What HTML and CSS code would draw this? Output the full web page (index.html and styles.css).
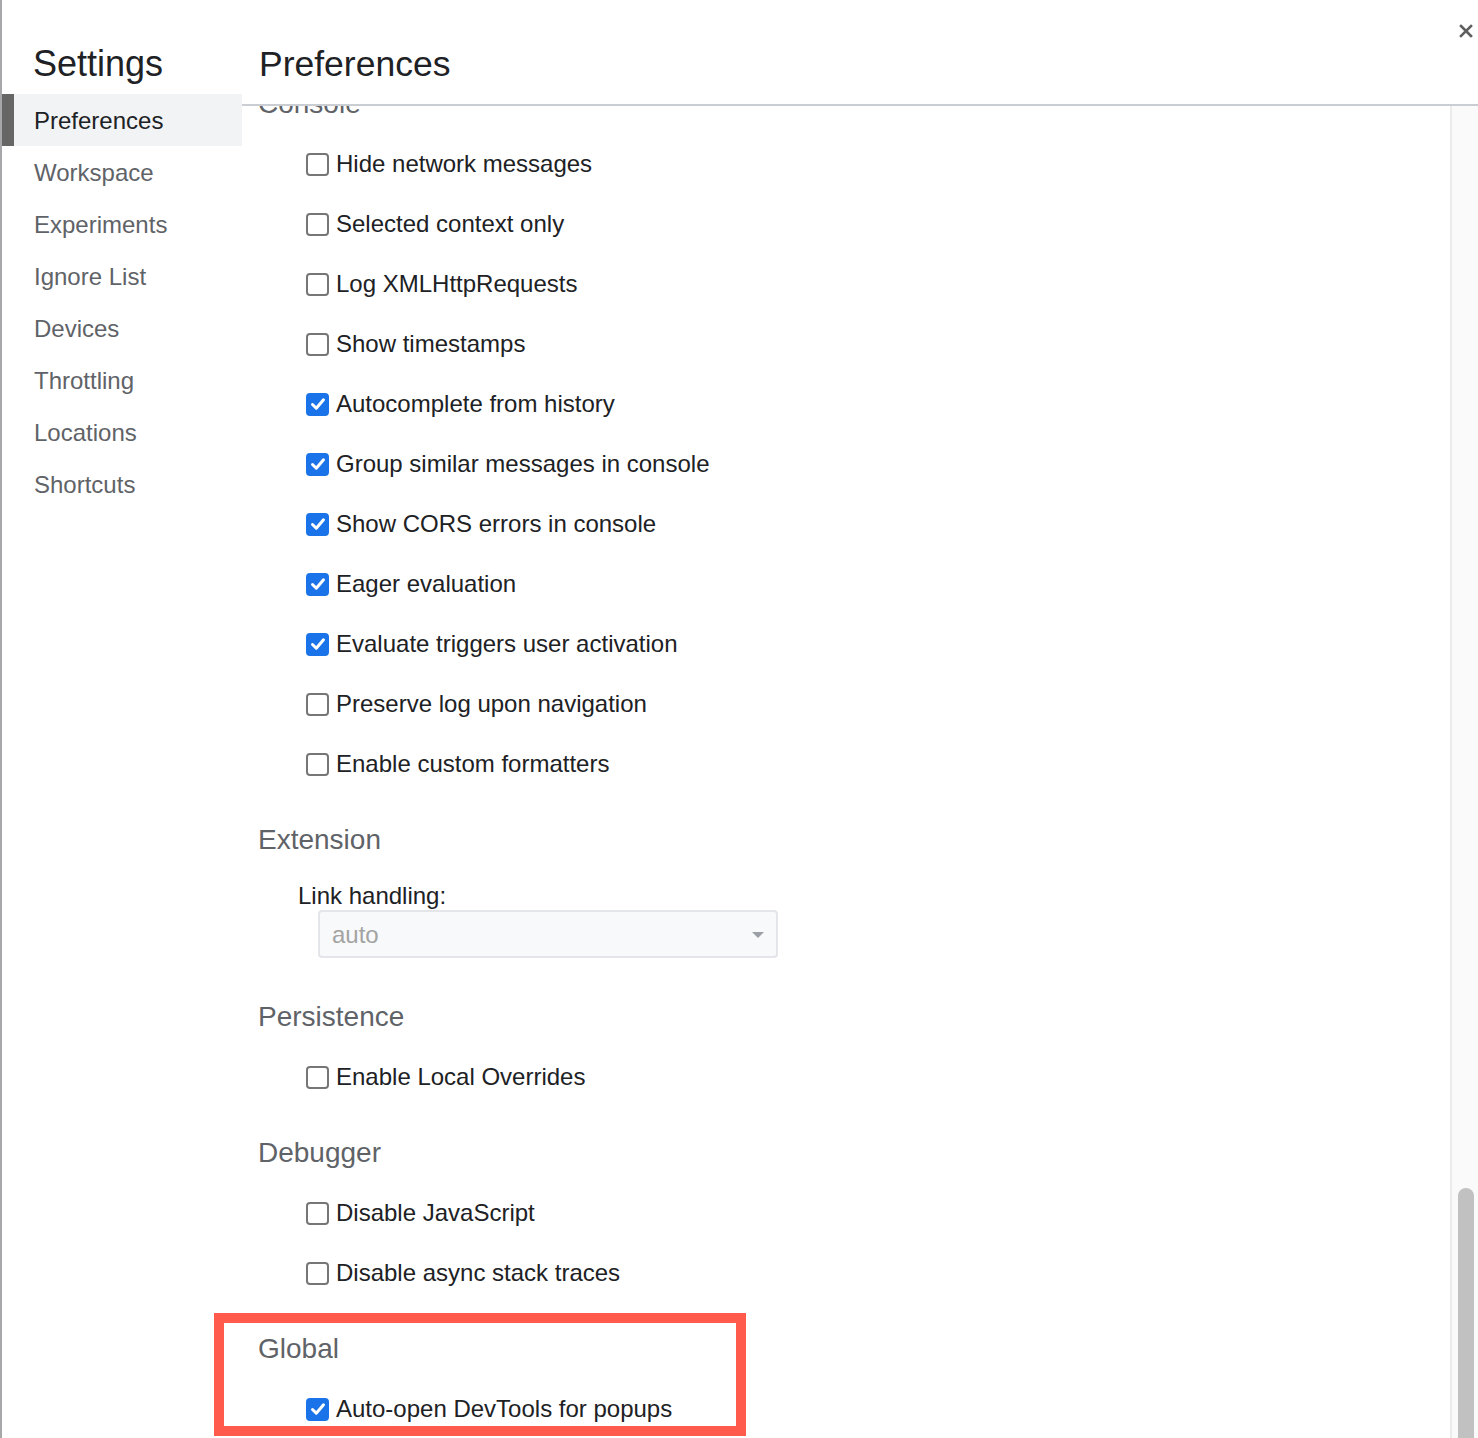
FILE: index.html
```html
<!DOCTYPE html>
<html lang="en">
<head>
<meta charset="utf-8">
<title>Settings</title>
<link rel="stylesheet" href="styles.css">
</head>
<body>
<div class="window">
  <aside class="sidebar">
    <div class="sidebar-title">Settings</div>
    <nav class="nav">
      <div class="nav-item selected">Preferences</div>
      <div class="nav-item">Workspace</div>
      <div class="nav-item">Experiments</div>
      <div class="nav-item">Ignore List</div>
      <div class="nav-item">Devices</div>
      <div class="nav-item">Throttling</div>
      <div class="nav-item">Locations</div>
      <div class="nav-item">Shortcuts</div>
    </nav>
  </aside>
  <main class="main">
    <header class="header">
      <div class="header-title">Preferences</div>
      <button class="close" aria-label="Close">
        <svg width="14" height="14" viewBox="0 0 14 14"><path d="M2 2 L12 12 M12 2 L2 12" stroke="#5f5f5f" stroke-width="2.6" stroke-linecap="square"/></svg>
      </button>
    </header>
    <div class="body">
      <div class="scroll">
        <div class="scroll-inner">
          <section class="section">
            <div class="section-title">Console</div>
            <label class="row"><span class="cb"></span>Hide network messages</label>
            <label class="row"><span class="cb"></span>Selected context only</label>
            <label class="row"><span class="cb"></span>Log XMLHttpRequests</label>
            <label class="row"><span class="cb"></span>Show timestamps</label>
            <label class="row"><span class="cb on"><svg viewBox="0 0 22 22"><path d="M5.5 11.5 L9.3 15.2 L16.5 6.8"/></svg></span>Autocomplete from history</label>
            <label class="row"><span class="cb on"><svg viewBox="0 0 22 22"><path d="M5.5 11.5 L9.3 15.2 L16.5 6.8"/></svg></span>Group similar messages in console</label>
            <label class="row"><span class="cb on"><svg viewBox="0 0 22 22"><path d="M5.5 11.5 L9.3 15.2 L16.5 6.8"/></svg></span>Show CORS errors in console</label>
            <label class="row"><span class="cb on"><svg viewBox="0 0 22 22"><path d="M5.5 11.5 L9.3 15.2 L16.5 6.8"/></svg></span>Eager evaluation</label>
            <label class="row"><span class="cb on"><svg viewBox="0 0 22 22"><path d="M5.5 11.5 L9.3 15.2 L16.5 6.8"/></svg></span>Evaluate triggers user activation</label>
            <label class="row"><span class="cb"></span>Preserve log upon navigation</label>
            <label class="row"><span class="cb"></span>Enable custom formatters</label>
          </section>
          <section class="section">
            <div class="section-title">Extension</div>
            <div class="field">
              <div class="field-label">Link handling:</div>
              <div class="select">
                <span class="select-value">auto</span>
                <svg class="select-arrow" width="12" height="6" viewBox="0 0 12 6"><path d="M0 0 H12 L6 6 Z" fill="#9aa0a6"/></svg>
              </div>
            </div>
          </section>
          <section class="section">
            <div class="section-title">Persistence</div>
            <label class="row"><span class="cb"></span>Enable Local Overrides</label>
          </section>
          <section class="section">
            <div class="section-title">Debugger</div>
            <label class="row"><span class="cb"></span>Disable JavaScript</label>
            <label class="row"><span class="cb"></span>Disable async stack traces</label>
          </section>
          <section class="section">
            <div class="section-title">Global</div>
            <label class="row"><span class="cb on"><svg viewBox="0 0 22 22"><path d="M5.5 11.5 L9.3 15.2 L16.5 6.8"/></svg></span>Auto-open DevTools for popups</label>
          </section>
        </div>
      </div>
      <div class="scrollbar"><div class="thumb"></div></div>
    </div>
  </main>
  <div class="highlight"></div>
</div>
</body>
</html>
```

FILE: styles.css
```css
* { box-sizing: border-box; }

html, body {
  margin: 0;
  padding: 0;
  background: #ffffff;
}

body {
  font-family: "Liberation Sans", Helvetica, Arial, sans-serif;
  color: #202124;
}

.window {
  position: relative;
  display: flex;
  height: 1438px;
  overflow: hidden;
  border-left: 2px solid #a7a7a9;
}

.sidebar {
  width: 240px;
  flex: none;
  display: flex;
  flex-direction: column;
}

.sidebar-title {
  font-size: 36px;
  line-height: 42px;
  padding: 43px 0 9px 31px;
  color: #202124;
}

.nav {
  display: flex;
  flex-direction: column;
}

.nav-item {
  height: 52px;
  line-height: 54px;
  font-size: 24px;
  padding-left: 32px;
  color: #5f6368;
}

.nav-item.selected {
  background: #f1f3f4;
  border-left: 12px solid #666666;
  padding-left: 20px;
  color: #202124;
}

.main {
  flex: 1;
  display: flex;
  flex-direction: column;
  min-width: 0;
}

.header {
  height: 106px;
  flex: none;
  display: flex;
  align-items: flex-start;
  padding-left: 17px;
  border-bottom: 2px solid #cacdd1;
}

.header-title {
  font-size: 35.5px;
  line-height: 42px;
  margin-top: 43px;
  color: #202124;
}

.close {
  margin-left: auto;
  margin-top: 24px;
  margin-right: 5px;
  width: 14px;
  height: 14px;
  padding: 0;
  border: 0;
  background: none;
  display: flex;
}

.body {
  flex: 1;
  display: flex;
  min-height: 0;
}

.scroll {
  flex: 1;
  overflow: hidden;
}

.scroll-inner {
  margin-top: -22px;
}

.section {
  padding-left: 16px;
  margin-bottom: 26px;
}

.section-title {
  height: 40px;
  line-height: 40px;
  font-size: 28px;
  color: #5f6368;
  margin-bottom: 10px;
}

.row {
  display: flex;
  align-items: center;
  height: 60px;
  padding-left: 48px;
  font-size: 24px;
  color: #202124;
}

.cb {
  width: 23px;
  height: 23px;
  flex: none;
  border: 2px solid #767676;
  border-radius: 4px;
  margin-right: 7px;
  display: flex;
  align-items: center;
  justify-content: center;
}

.cb.on {
  background: #1a73e8;
  border-color: #1a73e8;
}

.cb svg {
  width: 22px;
  height: 22px;
  flex: none;
}

.cb svg path {
  fill: none;
  stroke: #ffffff;
  stroke-width: 3;
  stroke-linecap: round;
  stroke-linejoin: round;
}

.field {
  padding: 12px 0 13px 40px;
}

.field-label {
  font-size: 24px;
  line-height: 28px;
  color: #202124;
}

.select {
  margin-left: 20px;
  width: 460px;
  height: 48px;
  border: 2px solid #e3e5e8;
  border-radius: 4px;
  background: #f8f9fa;
  display: flex;
  align-items: center;
  padding: 2px 12px 0 12px;
}

.select-value {
  font-size: 24px;
  color: #a3a3a3;
}

.select-arrow {
  margin-left: auto;
}

.scrollbar {
  width: 28px;
  flex: none;
  border-left: 2px solid #ebebeb;
  background: #fafafa;
  padding-left: 6px;
}

.thumb {
  width: 16px;
  height: 400px;
  margin-top: 1082px;
  border-radius: 8px;
  background: #c1c1c1;
}

.highlight {
  position: absolute;
  left: 212px;
  top: 1313px;
  width: 532px;
  height: 123px;
  border: 10px solid #ff5a4b;
  pointer-events: none;
}
```
